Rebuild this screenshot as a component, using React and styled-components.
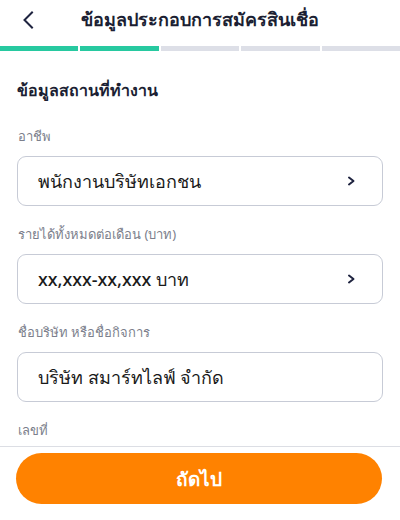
import React from 'react'
import styled, { createGlobalStyle } from 'styled-components';

const GlobalStyle = createGlobalStyle`
  html, body { margin: 0; padding: 0; background: #ffffff; }
  body { font-family: "Noto Sans", "Open Sans", sans-serif; }
  * { box-sizing: border-box; }
`;

const Screen = styled.div`
  width: 400px;
  height: 520px;
  display: flex;
  flex-direction: column;
  overflow: hidden;
  background: #fff;
`;

const Header = styled.div`
  height: 46px;
  display: flex;
  align-items: center;
  justify-content: center;
  position: relative;
`;

const BackButton = styled.button`
  position: absolute;
  left: 16px;
  top: 8px;
  width: 24px;
  height: 24px;
  padding: 0;
  border: none;
  background: none;
  display: flex;
  align-items: center;
  justify-content: center;
`;

const Title = styled.h1`
  margin: 0 0 8px;
  font-size: 18px;
  font-weight: 700;
  color: #1c1f33;
`;

const Progress = styled.div`
  display: flex;
  gap: 2px;
  height: 5px;
`;

const Step = styled.div`
  flex: 1;
  background: ${p => (p.$done ? '#27c9a0' : '#dddfe7')};
`;

const Content = styled.div`
  flex: 1;
  overflow: hidden;
  padding: 27px 17px 0;
`;

const SectionTitle = styled.h2`
  margin: 0 0 23px;
  font-size: 16px;
  font-weight: 700;
  color: #1c1f33;
`;

const Field = styled.div`
  margin-bottom: 18px;
`;

const Label = styled.div`
  font-size: 13px;
  color: #7c7f8c;
  margin-bottom: 9px;
  padding-left: 1px;
`;

const Box = styled.div`
  height: 50px;
  border: 1px solid #c7cbd6;
  border-radius: 9px;
  display: flex;
  align-items: center;
  justify-content: space-between;
  padding: 0 26px 0 20px;
  font-size: 18px;
  font-weight: 500;
  color: #1a1a1a;
`;

const Footer = styled.div`
  border-top: 1px solid #dcdee4;
  padding: 6px 18px 16px 16px;
`;

const NextButton = styled.button`
  width: 100%;
  height: 51px;
  border: none;
  border-radius: 26px;
  background: #ff8200;
  color: #fff;
  font-family: inherit;
  font-size: 19px;
  font-weight: 600;
`;

const Chevron = ({ dir = 'right' }) => (
  dir === 'left' ? (
    <svg width="14" height="18" viewBox="0 0 14 18">
      <path d="M11 1.5L3.5 9l7.5 7.5" fill="none" stroke="#1f2440" strokeWidth="2" strokeLinecap="square" />
    </svg>
  ) : (
    <svg width="9" height="10" viewBox="0 0 9 10">
      <path d="M2 1.5L6.5 5 2 8.5" fill="none" stroke="#1f2440" strokeWidth="2" strokeLinecap="round" strokeLinejoin="round" />
    </svg>
  )
);

const steps = [true, true, false, false, false];

function App() {
  return (
    <>
      <GlobalStyle />
      <Screen>
        <Header>
          <BackButton><Chevron dir="left" /></BackButton>
          <Title>ข้อมูลประกอบการสมัครสินเชื่อ</Title>
        </Header>
        <Progress>
          {steps.map((d, i) => <Step key={i} $done={d} />)}
        </Progress>
        <Content>
          <SectionTitle>ข้อมูลสถานที่ทำงาน</SectionTitle>
          <Field>
            <Label>อาชีพ</Label>
            <Box>พนักงานบริษัทเอกชน<Chevron /></Box>
          </Field>
          <Field>
            <Label>รายได้ทั้งหมดต่อเดือน (บาท)</Label>
            <Box>xx,xxx-xx,xxx บาท<Chevron /></Box>
          </Field>
          <Field>
            <Label>ชื่อบริษัท หรือชื่อกิจการ</Label>
            <Box>บริษัท สมาร์ทไลฟ์ จำกัด</Box>
          </Field>
          <Field>
            <Label>เลขที่</Label>
          </Field>
        </Content>
        <Footer>
          <NextButton>ถัดไป</NextButton>
        </Footer>
      </Screen>
    </>
  )
}

export default App
